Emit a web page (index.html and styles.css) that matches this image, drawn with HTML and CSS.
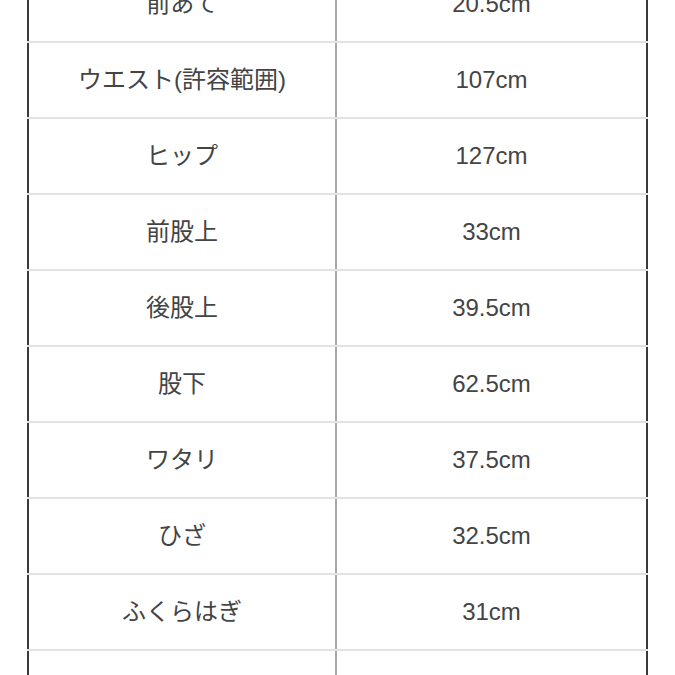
FILE: index.html
```html
<!DOCTYPE html>
<html lang="ja">
<head>
<meta charset="utf-8">
<link rel="stylesheet" href="styles.css">
</head>
<body>
<div class="page">
<table class="size-table">
<tbody>
<tr><td>前あて</td><td>20.5cm</td></tr>
<tr><td>ウエスト(許容範囲)</td><td>107cm</td></tr>
<tr><td>ヒップ</td><td>127cm</td></tr>
<tr><td>前股上</td><td>33cm</td></tr>
<tr><td>後股上</td><td>39.5cm</td></tr>
<tr><td>股下</td><td>62.5cm</td></tr>
<tr><td>ワタリ</td><td>37.5cm</td></tr>
<tr><td>ひざ</td><td>32.5cm</td></tr>
<tr><td>ふくらはぎ</td><td>31cm</td></tr>
<tr><td>裾幅</td><td>24cm</td></tr>
</tbody>
</table>
</div>
</body>
</html>
```

FILE: styles.css
```css
html, body {
  margin: 0;
  padding: 0;
  background: #ffffff;
}
.page {
  width: 675px;
  height: 675px;
  overflow: hidden;
  background: #ffffff;
}
.size-table {
  margin-top: -35px;
  margin-left: 27px;
  width: 621px;
  border-collapse: collapse;
  border-left: 2px solid #3a3a3a;
  border-right: 2px solid #3a3a3a;
  font-family: "Liberation Sans", "Noto Sans CJK JP", sans-serif;
  font-size: 24px;
  color: #444444;
  table-layout: fixed;
}
.size-table td {
  height: 74px;
  padding: 0;
  text-align: center;
  vertical-align: middle;
  border-top: 2px solid #e2e2e2;
  border-bottom: 2px solid #e2e2e2;
  line-height: 1;
}
.size-table td:first-child {
  width: 306px;
  border-right: 2px solid #a8a8a8;
}
```
